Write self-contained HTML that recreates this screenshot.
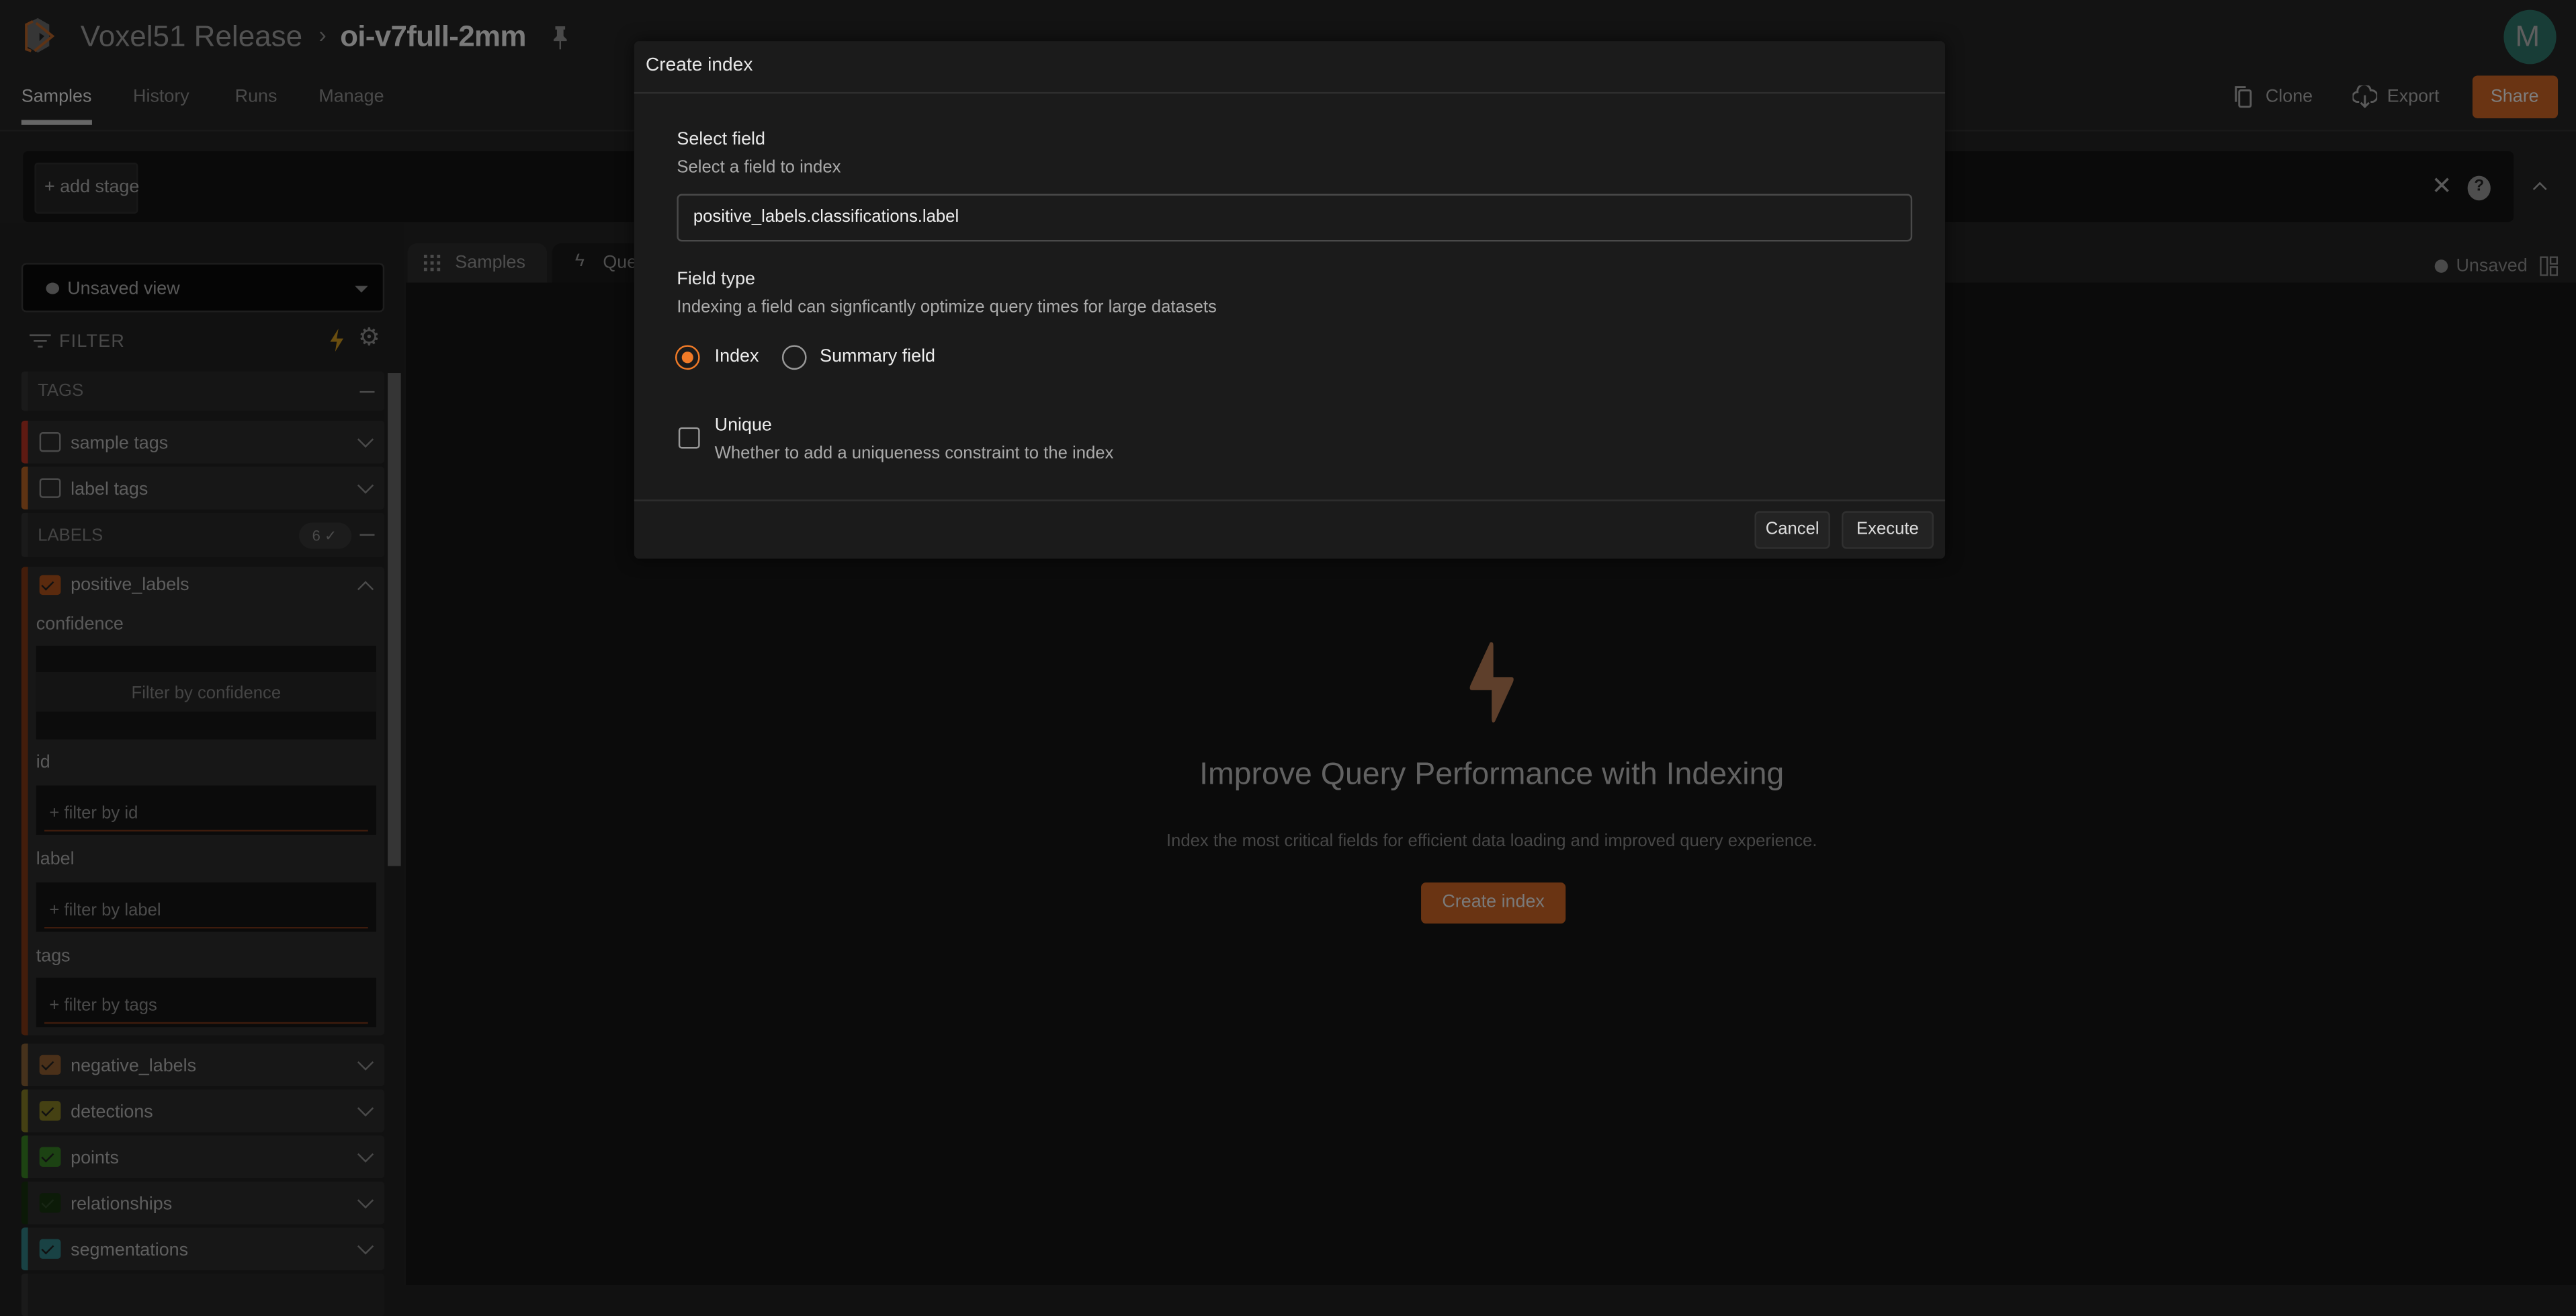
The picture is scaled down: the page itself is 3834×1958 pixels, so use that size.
<!DOCTYPE html>
<html><head><meta charset="utf-8"><style>
*{margin:0;padding:0;box-sizing:border-box}
html,body{width:3834px;height:1912px;overflow:hidden;background:#111}
#w{position:absolute;left:0;top:0;width:1568px;height:782px;transform:scale(2.44515,2.44501);transform-origin:0 0;font-family:"Liberation Sans",sans-serif;background:#121212;color:#666}
.a{position:absolute}
.t{position:absolute;white-space:nowrap;line-height:1}
.row{position:absolute;left:13px;width:221px;height:26px;background:#171717;border-radius:2px}
.row .bar{position:absolute;left:0;top:0;width:4px;height:100%;border-radius:2px 0 0 2px}
.row .cb{position:absolute;left:11px;top:7px;width:13px;height:12px;border-radius:2px}
.row .lb{position:absolute;left:30px;top:8px;font-size:11px;color:#5e5e5e}
.chev{position:absolute;right:8px;top:8px;width:7px;height:7px;border-right:1.3px solid #4a4a4a;border-bottom:1.3px solid #4a4a4a;transform:rotate(45deg)}
.ck{position:absolute;left:3px;top:2px;width:4px;height:7px;border-right:1.3px solid #111;border-bottom:1.3px solid #111;transform:rotate(45deg)}
.fi{position:absolute;left:22px;width:207px;height:30px;background:#0b0b0b}
.fi span{position:absolute;left:8px;top:11px;font-size:10.5px;color:#4a4a4a}
.fi i{position:absolute;left:5px;right:5px;bottom:2px;height:1px;background:#3e1c0d}
.sl{position:absolute;left:22px;font-size:11px;color:#5a5a5a}
</style></head><body><div id="w">
<div class="a" style="left:0;top:0;width:1568px;height:80px;background:#131313"></div>
<svg class="a" style="left:12px;top:10px" width="22" height="24" viewBox="0 0 22 24"><path d="M5 4 L11 1 L18 5 L18 18 L11 22 L4 18 Z" fill="#363636"/><path d="M8 3 L4 5 L4 20 L7 21" stroke="#5e3315" stroke-width="1.6" fill="none"/><path d="M10 4 L20 12 L9 21" stroke="#5e3315" stroke-width="1.6" fill="none"/><path d="M12 10 L15 12 L12 15 Z" fill="#111"/></svg>
<div class="t" style="left:49px;top:13px;font-size:18px;color:#525252">Voxel51 Release</div>
<div class="t" style="left:194px;top:14px;font-size:14px;color:#4a4a4a">›</div>
<div class="t" style="left:207px;top:13px;font-size:18px;font-weight:bold;color:#7a7a7a;letter-spacing:-.3px">oi-v7full-2mm</div>
<svg class="a" style="left:336px;top:15px" width="10" height="16" viewBox="0 0 10 16"><path d="M2 1 H8 V3 H7 V7 L9 9 V10 H1 V9 L3 7 V3 H2 Z M4.5 10 V15 H5.5 V10 Z" fill="#4a4a4a"/></svg>
<div class="a" style="left:1524px;top:6px;width:32px;height:33px;border-radius:50%;background:#183d37"></div>
<div class="t" style="left:1531px;top:13px;font-size:18px;color:#5e5e5e">M</div>
<div class="t" style="left:13px;top:54px;font-size:11px;color:#7a7a7a">Samples</div>
<div class="a" style="left:13px;top:73px;width:43px;height:3px;background:#666"></div>
<div class="t" style="left:81px;top:54px;font-size:11px;color:#4a4a4a">History</div>
<div class="t" style="left:143px;top:54px;font-size:11px;color:#4a4a4a">Runs</div>
<div class="t" style="left:194px;top:54px;font-size:11px;color:#4a4a4a">Manage</div>
<svg class="a" style="left:1360px;top:52px" width="12" height="14" viewBox="0 0 12 14"><rect x="3" y="3" width="7" height="10" rx="1" fill="none" stroke="#5a5a5a" stroke-width="1.2"/><path d="M1 10 V1 H7" fill="none" stroke="#5a5a5a" stroke-width="1.2"/></svg>
<div class="t" style="left:1379px;top:54px;font-size:11px;color:#5a5a5a">Clone</div>
<svg class="a" style="left:1432px;top:52px" width="15" height="14" viewBox="0 0 15 14"><path d="M4 10 H3 A3 3 0 0 1 3 4 A4 4 0 0 1 11 3 A3 3 0 0 1 12 10 H11" fill="none" stroke="#5a5a5a" stroke-width="1.2"/><path d="M7.5 6 V13 M5 10.5 L7.5 13 L10 10.5" fill="none" stroke="#5a5a5a" stroke-width="1.2"/></svg>
<div class="t" style="left:1453px;top:54px;font-size:11px;color:#5a5a5a">Export</div>
<div class="a" style="left:1505px;top:46px;width:52px;height:26px;background:#6a3413;border-radius:3px"></div>
<div class="t" style="left:1516px;top:54px;font-size:11px;color:#7e7e7e">Share</div>
<div class="a" style="left:0;top:79px;width:1568px;height:1px;background:#1a1a1a"></div>
<div class="a" style="left:14px;top:92px;width:1516px;height:43px;background:#0a0a0a;border-radius:3px"></div>
<div class="a" style="left:21px;top:99px;width:63px;height:31px;background:#131313;border:1px solid #181818;border-radius:2px"></div>
<div class="t" style="left:27px;top:109px;font-size:11px;color:#5a5a5a">+ add stage</div>
<div class="t" style="left:1480px;top:106px;font-size:15px;color:#5a5a5a">✕</div>
<div class="a" style="left:1502px;top:107px;width:14px;height:15px;border-radius:50%;background:#4e4e4e"></div>
<div class="t" style="left:1506px;top:109px;font-size:10px;font-weight:bold;color:#111">?</div>
<div class="a" style="left:1543px;top:112px;width:6px;height:6px;border-left:1.3px solid #5a5a5a;border-top:1.3px solid #5a5a5a;transform:rotate(45deg)"></div>
<div class="a" style="left:247px;top:172px;width:1321px;height:610px;background:#0b0b0b"></div>
<div class="a" style="left:248px;top:148px;width:85px;height:24px;background:#171717;border-radius:6px 6px 0 0"></div>
<svg class="a" style="left:258px;top:155px" width="10" height="10" viewBox="0 0 10 10" fill="#4a4a4a"><rect x="0" y="0" width="2" height="2"/><rect x="4" y="0" width="2" height="2"/><rect x="8" y="0" width="2" height="2"/><rect x="0" y="4" width="2" height="2"/><rect x="4" y="4" width="2" height="2"/><rect x="8" y="4" width="2" height="2"/><rect x="0" y="8" width="2" height="2"/><rect x="4" y="8" width="2" height="2"/><rect x="8" y="8" width="2" height="2"/></svg>
<div class="t" style="left:277px;top:155px;font-size:11px;color:#4e4e4e">Samples</div>
<div class="a" style="left:336px;top:148px;width:60px;height:24px;background:#0d0d0d;border-radius:6px 6px 0 0"></div>
<div class="t" style="left:350px;top:154px;font-size:11px;color:#4e4e4e">ϟ</div>
<div class="t" style="left:367px;top:155px;font-size:11px;color:#4e4e4e">Que</div>
<div class="a" style="left:1482px;top:158px;width:8px;height:8px;border-radius:50%;background:#4a4a4a"></div>
<div class="t" style="left:1495px;top:157px;font-size:11px;color:#4a4a4a">Unsaved</div>
<svg class="a" style="left:1546px;top:156px" width="11" height="12" viewBox="0 0 11 12"><rect x="0.5" y="0.5" width="4" height="11" fill="none" stroke="#4a4a4a"/><rect x="6.5" y="0.5" width="4" height="4" fill="none" stroke="#4a4a4a"/><rect x="6.5" y="6.5" width="4" height="5" fill="none" stroke="#4a4a4a"/></svg>
<svg class="a" style="left:890px;top:390px" width="36" height="50" viewBox="0 0 36 50"><path d="M17 1 Q19 0 19 3 V22 H30 Q32 22 31 25 L20 49 Q18 51 18 47 V30 H6 Q4 30 5 27 Z" fill="#5e3f2b"/></svg>
<div class="t" style="left:660px;top:462px;width:496px;text-align:center;font-size:19px;color:#626262">Improve Query Performance with Indexing</div>
<div class="t" style="left:600px;top:507px;width:616px;text-align:center;font-size:10.5px;color:#474747">Index the most critical fields for efficient data loading and improved query experience.</div>
<div class="a" style="left:865px;top:537px;width:88px;height:25px;background:#6a3413;border-radius:3px"></div>
<div class="t" style="left:865px;top:544px;width:88px;text-align:center;font-size:11px;color:#7a7a7a">Create index</div>
<div class="a" style="left:0;top:136px;width:246px;height:646px;background:#111"></div>
<div class="a" style="left:13px;top:160px;width:221px;height:30px;background:#050505;border:1px solid #1e1e1e;border-radius:3px"></div>
<div class="a" style="left:28px;top:172px;width:8px;height:7px;border-radius:50%;background:#4a4a4a"></div>
<div class="t" style="left:41px;top:171px;font-size:11px;color:#5a5a5a">Unsaved view</div>
<div class="a" style="left:216px;top:174px;border-left:4px solid transparent;border-right:4px solid transparent;border-top:4px solid #4a4a4a"></div>
<svg class="a" style="left:18px;top:203px" width="13" height="9" viewBox="0 0 13 9"><path d="M0 1 H13 M2.5 4.5 H10.5 M5 8 H8" stroke="#4a4a4a" stroke-width="1.1"/></svg>
<div class="t" style="left:36px;top:203px;font-size:11px;color:#4a4a4a;letter-spacing:.5px">FILTER</div>
<svg class="a" style="left:200px;top:200px" width="10" height="14" viewBox="0 0 10 14"><path d="M6 0 L1 8 H5 L4 14 L9 6 H5 Z" fill="#6a4e10"/></svg>
<div class="t" style="left:218px;top:198px;font-size:15px;color:#4a4a4a">⚙</div>
<div class="a" style="left:236px;top:227px;width:8px;height:300px;background:#353535"></div>
<div class="row" style="top:226px;height:24px;background:#151515"><div class="bar" style="background:#1a1a1a"></div><div class="t" style="left:10px;top:7px;font-size:10.5px;color:#444">TAGS</div><div class="a" style="right:6px;top:12px;width:9px;height:1px;background:#4a4a4a"></div></div>
<div class="row" style="top:256px"><div class="bar" style="background:#5e1a12"></div><div class="cb" style="border:1px solid #4a4a4a"></div><div class="lb">sample tags</div><div class="chev"></div></div>
<div class="row" style="top:284px"><div class="bar" style="background:#5e3313"></div><div class="cb" style="border:1px solid #4a4a4a"></div><div class="lb">label tags</div><div class="chev"></div></div>
<div class="row" style="top:312px;height:27px;background:#151515"><div class="bar" style="background:#1a1a1a"></div><div class="t" style="left:10px;top:9px;font-size:10.5px;color:#444">LABELS</div><div class="a" style="left:169px;top:6px;width:32px;height:16px;border-radius:8px;background:#1c1c1c"></div><div class="t" style="left:177px;top:10px;font-size:9px;color:#4a4a4a">6 ✓</div><div class="a" style="right:6px;top:13px;width:9px;height:1px;background:#4a4a4a"></div></div>
<div class="row" style="top:345px;height:285px"><div class="bar" style="background:#431d0b"></div><div class="cb" style="background:#5a2a0e;top:5px"><div class="ck"></div></div><div class="t" style="left:30px;top:6px;font-size:11px;color:#5e5e5e">positive_labels</div><div class="a" style="right:8px;top:10px;width:7px;height:7px;border-left:1.3px solid #4a4a4a;border-top:1.3px solid #4a4a4a;transform:rotate(45deg)"></div></div>
<div class="t sl" style="top:375px">confidence</div>
<div class="a" style="left:22px;top:393px;width:207px;height:57px;background:#0c0c0c"></div>
<div class="a" style="left:22px;top:409px;width:207px;height:24px;background:#141414"></div>
<div class="t" style="left:22px;top:417px;width:207px;text-align:center;font-size:10.5px;color:#454545">Filter by confidence</div>
<div class="t sl" style="top:459px">id</div>
<div class="fi" style="top:478px"><span>+ filter by id</span><i></i></div>
<div class="t sl" style="top:518px">label</div>
<div class="fi" style="top:537px"><span>+ filter by label</span><i></i></div>
<div class="t sl" style="top:577px">tags</div>
<div class="fi" style="top:595px"><span>+ filter by tags</span><i></i></div>
<div class="row" style="top:635px"><div class="bar" style="background:#46321c"></div><div class="cb" style="background:#4a3019"><div class="ck"></div></div><div class="lb">negative_labels</div><div class="chev"></div></div>
<div class="row" style="top:663px"><div class="bar" style="background:#444013"></div><div class="cb" style="background:#454113"><div class="ck"></div></div><div class="lb">detections</div><div class="chev"></div></div>
<div class="row" style="top:691px"><div class="bar" style="background:#1d4312"></div><div class="cb" style="background:#1c4213"><div class="ck"></div></div><div class="lb">points</div><div class="chev"></div></div>
<div class="row" style="top:719px"><div class="bar" style="background:#0b1907"></div><div class="cb" style="background:#0c1b08"><div class="ck" style="border-color:#182615"></div></div><div class="lb">relationships</div><div class="chev"></div></div>
<div class="row" style="top:747px"><div class="bar" style="background:#194244"></div><div class="cb" style="background:#194244"><div class="ck"></div></div><div class="lb">segmentations</div><div class="chev"></div></div>
<div class="row" style="top:775px;background:#141414"><div class="bar" style="background:#1a1a1a"></div></div>
<div class="a" style="left:386px;top:25px;width:798px;height:315px;background:#1b1b1b;border-radius:3px;box-shadow:0 0 10px rgba(0,0,0,.6)"></div>
<div class="t" style="left:393px;top:35px;font-size:11.5px;color:#e6e6e6">Create index</div>
<div class="a" style="left:386px;top:56px;width:798px;height:1px;background:#2e2e2e"></div>
<div class="t" style="left:412px;top:80px;font-size:11px;color:#e6e6e6">Select field</div>
<div class="t" style="left:412px;top:97px;font-size:10.5px;color:#aaa">Select a field to index</div>
<div class="a" style="left:412px;top:118px;width:752px;height:29px;border:1px solid #4a4a4a;border-radius:3px"></div>
<div class="t" style="left:422px;top:127px;font-size:10.5px;color:#eee">positive_labels.classifications.label</div>
<div class="t" style="left:412px;top:165px;font-size:11px;color:#e6e6e6">Field type</div>
<div class="t" style="left:412px;top:182px;font-size:10.5px;color:#aaa">Indexing a field can signficantly optimize query times for large datasets</div>
<div class="a" style="left:411px;top:210px;width:15px;height:15px;border-radius:50%;border:1.6px solid #f07a27"></div>
<div class="a" style="left:415px;top:214px;width:7px;height:7px;border-radius:50%;background:#f07a27"></div>
<div class="t" style="left:435px;top:212px;font-size:11px;color:#eee">Index</div>
<div class="a" style="left:476px;top:210px;width:15px;height:15px;border-radius:50%;border:1.6px solid #999"></div>
<div class="t" style="left:499px;top:212px;font-size:11px;color:#eee">Summary field</div>
<div class="a" style="left:413px;top:260px;width:13px;height:13px;border-radius:2px;border:1.5px solid #999"></div>
<div class="t" style="left:435px;top:254px;font-size:11px;color:#eee">Unique</div>
<div class="t" style="left:435px;top:271px;font-size:10.5px;color:#aaa">Whether to add a uniqueness constraint to the index</div>
<div class="a" style="left:386px;top:304px;width:798px;height:1px;background:#2e2e2e"></div>
<div class="a" style="left:1068px;top:311px;width:46px;height:23px;background:#232323;border:1px solid #303030;border-radius:3px"></div>
<div class="t" style="left:1068px;top:317px;width:46px;text-align:center;font-size:10.5px;color:#ddd">Cancel</div>
<div class="a" style="left:1121px;top:311px;width:56px;height:23px;background:#232323;border:1px solid #303030;border-radius:3px"></div>
<div class="t" style="left:1121px;top:317px;width:56px;text-align:center;font-size:10.5px;color:#ddd">Execute</div>
</div></body></html>
